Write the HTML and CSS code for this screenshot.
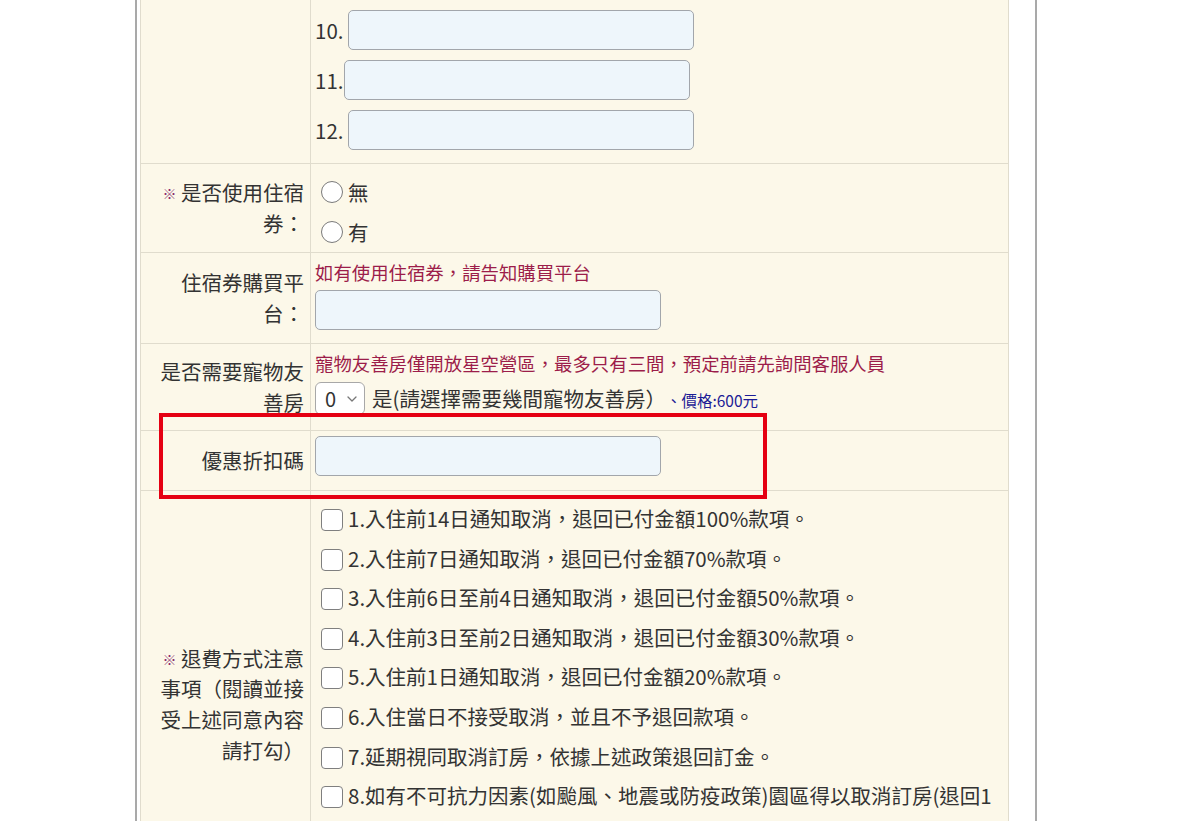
FILE: index.html
```html
<!DOCTYPE html>
<html lang="zh-Hant">
<head>
<meta charset="utf-8">
<title>訂房表單</title>
<link rel="stylesheet" href="styles.css">
</head>
<body>
<div class="page">
  <div class="frame">
    <table class="form">
      <colgroup><col class="c-label"><col class="c-field"></colgroup>
      <tr>
        <th class="lbl"></th>
        <td class="fld p-names">
          <div class="name-item">9. <input type="text" class="txt"></div>
          <div class="name-item">10. <input type="text" class="txt"></div>
          <div class="name-item narrow">11. <input type="text" class="txt"></div>
          <div class="name-item">12. <input type="text" class="txt"></div>
        </td>
      </tr>
      <tr>
        <th class="lbl"><span class="req">※</span> 是否使用住宿券：</th>
        <td class="fld p-radio">
          <label class="radio-line"><input type="radio" name="voucher" class="rd">無</label>
          <label class="radio-line"><input type="radio" name="voucher" class="rd">有</label>
        </td>
      </tr>
      <tr>
        <th class="lbl">住宿券購買平台：</th>
        <td class="fld p-std">
          <div class="note">如有使用住宿券，請告知購買平台</div>
          <input type="text" class="txt block">
        </td>
      </tr>
      <tr>
        <th class="lbl">是否需要寵物友善房</th>
        <td class="fld p-std">
          <div class="note">寵物友善房僅開放星空營區，最多只有三間，預定前請先詢問客服人員</div>
          <div class="pet-line">
            <span class="sel-wrap">
              <select class="sel"><option>0</option><option>1</option><option>2</option><option>3</option></select>
              <svg class="chev" width="10" height="6" viewBox="0 0 10 6"><path d="M1 1 L5 5 L9 1" fill="none" stroke="#777" stroke-width="1.3" stroke-linecap="round" stroke-linejoin="round"/></svg>
            </span>
            <span class="pet-text">是(請選擇需要幾間寵物友善房）</span>
            <span class="price">、價格:600元</span>
          </div>
        </td>
      </tr>
      <tr>
        <th class="lbl">優惠折扣碼</th>
        <td class="fld p-code">
          <input type="text" class="txt block code">
        </td>
      </tr>
      <tr>
        <th class="lbl"><span class="req">※</span> 退費方式注意事項（閱讀並接受上述同意內容請打勾）</th>
        <td class="fld p-checks">
          <label class="chk-line"><input type="checkbox" class="cb">1.入住前14日通知取消，退回已付金額100%款項。</label>
          <label class="chk-line"><input type="checkbox" class="cb">2.入住前7日通知取消，退回已付金額70%款項。</label>
          <label class="chk-line"><input type="checkbox" class="cb">3.入住前6日至前4日通知取消，退回已付金額50%款項。</label>
          <label class="chk-line"><input type="checkbox" class="cb">4.入住前3日至前2日通知取消，退回已付金額30%款項。</label>
          <label class="chk-line"><input type="checkbox" class="cb">5.入住前1日通知取消，退回已付金額20%款項。</label>
          <label class="chk-line"><input type="checkbox" class="cb">6.入住當日不接受取消，並且不予退回款項。</label>
          <label class="chk-line"><input type="checkbox" class="cb">7.延期視同取消訂房，依據上述政策退回訂金。</label>
          <label class="chk-line"><input type="checkbox" class="cb">8.如有不可抗力因素(如颱風、地震或防疫政策)園區得以取消訂房(退回100%訂金)</label>
        </td>
      </tr>
    </table>
    <div class="highlight"></div>
  </div>
</div>
</body>
</html>
```
FILE: styles.css
```css
html, body {
  margin: 0;
  padding: 0;
  background: #ffffff;
}

body {
  font-family: "Noto Sans CJK TC", "Noto Sans", sans-serif;
  color: #333333;
  overflow: hidden;
}

.page {
  margin-left: 135px;
  width: 895px;
  min-height: 900px;
  border-left: 2px solid #a9a9a9;
  border-right: 2px solid #a9a9a9;
  padding-left: 3px;
  display: flow-root;
}

.frame {
  position: relative;
  width: 869px;
  margin-top: -52px;
}

.form {
  width: 869px;
  border-collapse: collapse;
  background: #fcf8e9;
  border: 1px solid #e6e2d4;
  table-layout: fixed;
}

.c-label { width: 170px; }

.form th,
.form td {
  border: 1px solid #e0dccd;
}

.lbl {
  font-weight: normal;
  text-align: right;
  vertical-align: middle;
  font-size: 20.5px;
  line-height: 1.5;
  padding: 4px 6px 4px 4px;
  color: #333333;
}

.req {
  color: #8a2b6e;
  font-size: 14px;
  vertical-align: 2px;
}

.fld {
  vertical-align: top;
  font-size: 20.5px;
  padding-left: 4px;
  padding-right: 4px;
}

.p-names { padding-top: 6px; padding-bottom: 8px; }
.p-radio { padding-top: 8px; padding-bottom: 0; }
.p-std { padding-top: 6px; padding-bottom: 7px; }
.p-code { padding-top: 5px; padding-bottom: 6px; }
.p-checks { padding-top: 8px; padding-right: 8px; padding-bottom: 62px; word-break: break-all; }

.name-item {
  height: 50px;
  display: flex;
  align-items: center;
  white-space: pre;
}

.name-item.narrow .txt {
  margin-left: -4px;
}

.txt {
  width: 346px;
  height: 40px;
  box-sizing: border-box;
  border: 1px solid #a2a6ab;
  border-radius: 5px;
  background: #eef6fb;
  font-size: 18px;
  padding: 0 8px;
  margin: 0;
  outline: none;
}

.txt.block {
  display: block;
  margin: 5px 0 6px;
}

.txt.code {
  margin: 0 0 8px;
}

.radio-line {
  display: flex;
  align-items: center;
  height: 40px;
}

.rd {
  appearance: none;
  -webkit-appearance: none;
  width: 22px;
  height: 22px;
  box-sizing: border-box;
  border: 1px solid #7a7a7a;
  border-radius: 50%;
  background: #ffffff;
  margin: 0 5px 0 6px;
  flex: none;
}

.note {
  color: #9c1d4a;
  font-size: 18.4px;
  line-height: 26px;
  white-space: nowrap;
}

.pet-line {
  display: flex;
  align-items: center;
  height: 44px;
  margin-bottom: 3px;
  white-space: nowrap;
}

.sel-wrap {
  position: relative;
  display: inline-block;
  flex: none;
}

.sel {
  appearance: none;
  -webkit-appearance: none;
  width: 50px;
  height: 33px;
  box-sizing: border-box;
  border: 1px solid #a8a8a8;
  border-radius: 6px;
  background: #ffffff;
  color: #333333;
  font-family: "Noto Sans CJK TC", "Noto Sans", sans-serif;
  font-size: 20px;
  padding: 0 0 0 9px;
  margin: 0;
  display: block;
}

.chev {
  position: absolute;
  right: 8px;
  top: 14px;
  pointer-events: none;
}

.pet-text {
  margin-left: 7px;
}

.price {
  color: #1c1c96;
  font-size: 15.5px;
  margin-left: 0;
  margin-top: 3px;
}

.chk-line {
  display: block;
  line-height: 39.6px;
}

.cb {
  appearance: none;
  -webkit-appearance: none;
  width: 22px;
  height: 22px;
  box-sizing: border-box;
  border: 1px solid #7f7f7f;
  border-radius: 4px;
  background: #ffffff;
  margin: 0 5px 0 6px;
  vertical-align: -4px;
}

.highlight {
  position: absolute;
  left: 19px;
  top: 465px;
  width: 608px;
  height: 86px;
  box-sizing: border-box;
  border: 4.5px solid #e50012;
  pointer-events: none;
}
```
